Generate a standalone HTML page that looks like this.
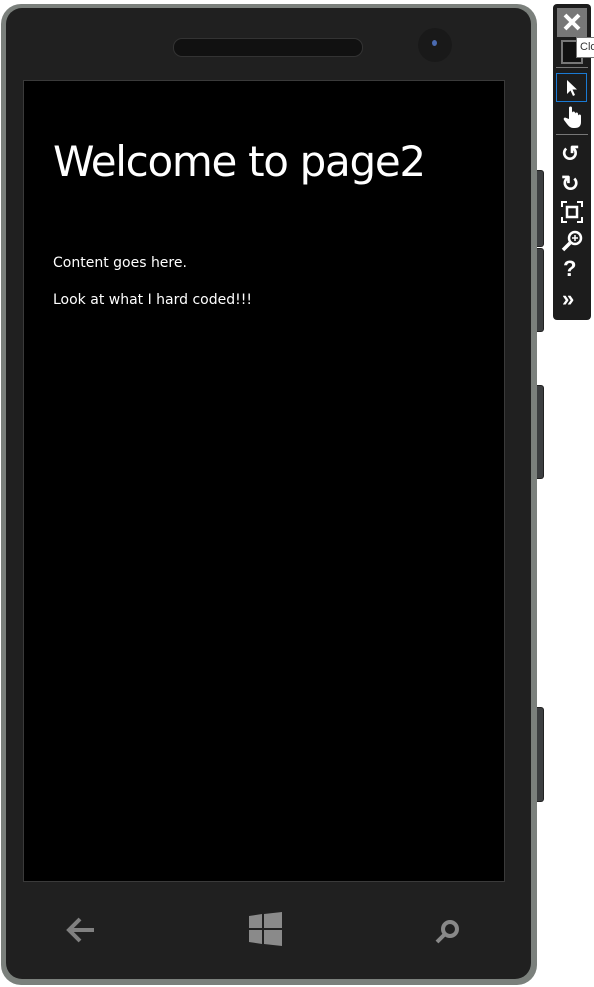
<!DOCTYPE html>
<html><head><style>
body{margin:0;width:594px;height:987px;background:#fff;position:relative;overflow:hidden;font-family:"Liberation Sans",sans-serif}
.outer{position:absolute;left:1px;top:4px;width:536px;height:981px;background:#7b807c;border-radius:20px}
.inner{position:absolute;left:5px;top:4px;width:525px;height:971px;background:#202020;border-radius:16px}
.screen{position:absolute;left:23px;top:80px;width:480px;height:800px;background:#000;border:1px solid #3a3a3a}
.speaker{position:absolute;left:173px;top:38px;width:188px;height:17px;background:#111;border:1px solid #333;border-radius:9px}
.cam{position:absolute;left:418px;top:28px;width:34px;height:34px;border-radius:50%;background:#191919}
.cam i{position:absolute;left:14px;top:12px;width:5px;height:6px;border-radius:50%;background:#4a6ab0}
.btn{position:absolute;left:537px;width:6px;background:#3c3e40;border-radius:0 3px 3px 0;border:1px solid #222;border-left:none}
.tb{position:absolute;left:553px;top:4px;width:38px;height:316px;background:#1c1c1c;border-radius:4px}
h1{position:absolute;left:53px;top:137px;margin:0;font-weight:normal;font-size:42px;color:#fff;font-family:"DejaVu Sans","Liberation Sans",sans-serif;letter-spacing:-1.3px}
.t{position:absolute;left:53px;color:#fff;font-size:14px;font-family:"DejaVu Sans",sans-serif}
</style></head><body>
<div class="btn" style="top:170px;height:75px"></div>
<div class="btn" style="top:248px;height:82px"></div>
<div class="btn" style="top:385px;height:92px"></div>
<div class="btn" style="top:707px;height:93px"></div>
<div class="outer"><div class="inner"></div></div>
<div class="speaker"></div>
<div class="cam"><i></i></div>
<div class="screen"></div>
<h1>Welcome to page2</h1>
<div class="t" style="top:255px">Content goes here.</div>
<div class="t" style="top:292px">Look at what I hard coded!!!</div>
<svg style="position:absolute;left:60px;top:910px" width="40" height="40" viewBox="0 0 40 40"><path d="M9 20H34M20 9L9 20L20 31" stroke="#808080" stroke-width="4" fill="none"/></svg>
<svg style="position:absolute;left:248px;top:912px" width="36" height="36" viewBox="0 0 36 36"><path d="M1 4L14 2V16H1ZM16 2L34 0V16H16ZM1 18H14V32L1 30ZM16 18H34V34L16 32Z" fill="#8a8a8a"/></svg>
<svg style="position:absolute;left:430px;top:914px" width="36" height="36" viewBox="0 0 36 36"><circle cx="20" cy="15" r="7" stroke="#888" stroke-width="4" fill="none"/><path d="M15 20L7 28" stroke="#888" stroke-width="4"/></svg>
<div class="tb">
<div style="position:absolute;left:4px;top:4px;width:30px;height:29px;background:#777"></div>
<svg style="position:absolute;left:4px;top:4px" width="30" height="29"><path d="M8 7L22 21M22 7L8 21" stroke="#fff" stroke-width="4"/></svg>
<div style="position:absolute;left:8px;top:36px;width:18px;height:20px;border:2px solid #777;background:#111"></div>
<div style="position:absolute;left:3px;top:63px;width:32px;height:1px;background:#777"></div>
<div style="position:absolute;left:3px;top:69px;width:29px;height:27px;border:1px solid #1a7ad4"></div>
<svg style="position:absolute;left:12px;top:75px" width="14" height="18"><path d="M2 1V15L5.5 11.5L8 17L10 16L7.5 10.5H12Z" fill="#fff"/></svg>
<svg style="position:absolute;left:9px;top:101px" width="22" height="24" viewBox="0 0 22 24"><path d="M7 14V3a1.5 1.5 0 0 1 3 0V11V8a1.5 1.5 0 0 1 3 0V11V9a1.5 1.5 0 0 1 3 0V12V11a1.5 1.5 0 0 1 3 0V17q0 6-6 6H11Q8 23 5 19L2 15Q1 13 3 12.5Z" fill="#fff"/></svg>
<div style="position:absolute;left:3px;top:130px;width:32px;height:1px;background:#777"></div>
<div style="position:absolute;left:8px;top:137px;color:#fff;font-size:22px;font-weight:bold">↺</div>
<div style="position:absolute;left:8px;top:167px;color:#fff;font-size:22px;font-weight:bold">↻</div>
<svg style="position:absolute;left:8px;top:197px" width="22" height="22"><path d="M1 6V1H6M16 1H21V6M21 16V21H16M6 21H1V16" stroke="#fff" stroke-width="2" fill="none"/><rect x="6" y="6" width="10" height="10" stroke="#fff" stroke-width="2.5" fill="none"/></svg>
<svg style="position:absolute;left:8px;top:226px" width="22" height="22"><circle cx="14" cy="8" r="6" stroke="#fff" stroke-width="2.5" fill="none"/><path d="M14 5V11M11 8H17" stroke="#fff" stroke-width="1.5"/><path d="M9 13L2 20" stroke="#fff" stroke-width="3.5"/></svg>
<div style="position:absolute;left:10px;top:252px;color:#fff;font-size:22px;font-weight:bold">?</div>
<div style="position:absolute;left:9px;top:282px;color:#fff;font-size:22px;font-weight:bold">»</div>
</div>
<div style="position:absolute;left:576px;top:37px;width:24px;height:19px;background:#fff;border:1px solid #777;font-size:11px;color:#333;line-height:19px;padding-left:3px">Clo</div>
</body></html>
